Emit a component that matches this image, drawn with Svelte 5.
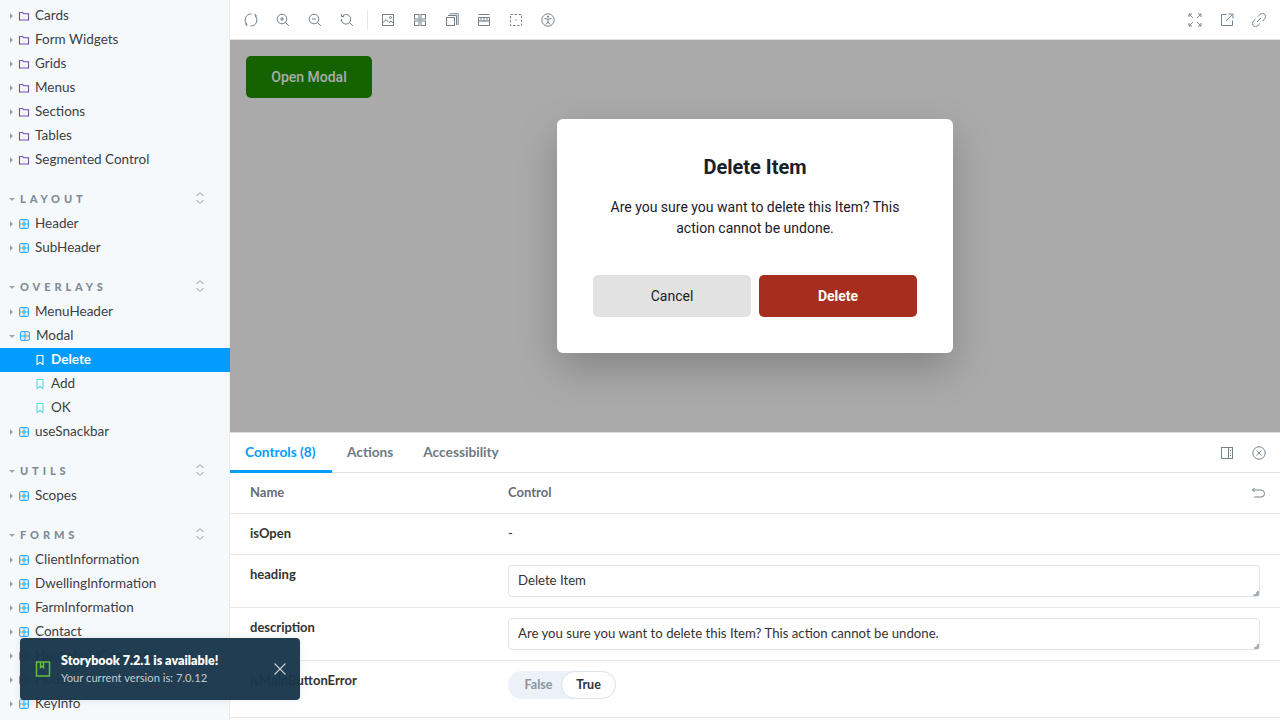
<script>
	const sections = [
		{ items: ['Cards', 'Form Widgets', 'Grids', 'Menus', 'Sections', 'Tables', 'Segmented Control'].map((name) => ({ name, kind: 'folder' })) },
		{ title: 'LAYOUT', items: ['Header', 'SubHeader'].map((name) => ({ name, kind: 'comp' })) },
		{
			title: 'OVERLAYS',
			items: [
				{ name: 'MenuHeader', kind: 'comp' },
				{ name: 'Modal', kind: 'comp', open: true },
				{ name: 'Delete', kind: 'story', selected: true },
				{ name: 'Add', kind: 'story' },
				{ name: 'OK', kind: 'story' },
				{ name: 'useSnackbar', kind: 'comp' }
			]
		},
		{ title: 'UTILS', items: [{ name: 'Scopes', kind: 'comp' }] },
		{
			title: 'FORMS',
			items: ['ClientInformation', 'DwellingInformation', 'FarmInformation', 'Contact', 'HouseholdContents', 'House', 'KeyInfo'].map((name) => ({ name, kind: 'comp' }))
		}
	];

	const tabs = ['Controls (8)', 'Actions', 'Accessibility'];
</script>

<div class="shell">
	<aside class="sidebar">
		{#each sections as section}
			<section class="group">
				{#if section.title}
					<div class="heading">
						<span class="caret down"></span>
						<span class="heading-text">{section.title}</span>
						<svg class="expand" width="10" height="14" viewBox="0 0 10 14" fill="none" stroke="#8a97a1" stroke-width="1">
							<path d="M1.5 5 5 1.5 8.5 5M1.5 9 5 12.5 8.5 9" />
						</svg>
					</div>
				{/if}
				{#each section.items as item}
					<div class="row" class:story={item.kind === 'story'} class:selected={item.selected}>
						{#if item.kind !== 'story'}
							<span class="caret" class:down={item.open}></span>
						{/if}
						{#if item.kind === 'folder'}
							<svg width="12" height="12" viewBox="0 0 12 12" fill="none" stroke="#6f4fb0" stroke-width="1.1">
								<path d="M1.5 10V2.5h3l1 1.2h5V10z" />
							</svg>
						{:else if item.kind === 'comp'}
							<svg width="12" height="12" viewBox="0 0 12 12" fill="none" stroke="#3fa9f5" stroke-width="1">
								<rect x="1.5" y="1.5" width="9" height="9" rx="1.5" fill="#d4ecfd" />
								<path d="M6 1.5v9M1.5 6h9" />
							</svg>
						{:else}
							<svg width="10" height="12" viewBox="0 0 10 12" fill="none" stroke={item.selected ? '#fff' : '#5fdcd8'} stroke-width="1.1">
								<path d="M2 1.5h6v9L5 8.5l-3 2z" />
							</svg>
						{/if}
						<span class="label">{item.name}</span>
					</div>
				{/each}
			</section>
		{/each}
	</aside>

	<main class="content">
		<div class="toolbar">
			<div class="tools">
				<svg class="ic" viewBox="0 0 14 14"><path d="M7.5 1A6 6 0 0 0 2.800 11.200M6.500 13A6 6 0 0 0 11.200 2.800M11.200 .8V3h2M2.800 13.200V11H.8" /></svg>
				<svg class="ic" viewBox="0 0 14 14"><circle cx="6" cy="6" r="4.8" /><path d="M9.5 9.5 13 13M4 6h4M6 4v4" /></svg>
				<svg class="ic" viewBox="0 0 14 14"><circle cx="6" cy="6" r="4.8" /><path d="M9.5 9.5 13 13M4 6h4" /></svg>
				<svg class="ic" viewBox="0 0 14 14"><path d="M2.5 3A4.8 4.8 0 1 1 1.2 6M9.5 9.5 13 13M1.5 1v2.500H4" /></svg>
				<span class="sep"></span>
				<svg class="ic" viewBox="0 0 14 14"><rect x="1.5" y="1.5" width="11" height="11" /><path d="M1.5 10 5 6.500l3 3 2-1.500 2.500 2.500" /><circle cx="9.500" cy="4.500" r="1" /></svg>
				<svg class="ic" viewBox="0 0 14 14"><rect x="1.5" y="1.5" width="4.5" height="4.5" /><rect x="8" y="1.5" width="4.5" height="4.5" /><rect x="1.5" y="8" width="4.5" height="4.5" /><rect x="8" y="8" width="4.5" height="4.5" /><rect class="solid" x="5" y="5" width="4" height="4" /></svg>
				<svg class="ic" viewBox="0 0 14 14"><rect x="1.5" y="4.5" width="8" height="8" /><path d="M3 2.500h8.500V12M4.500 .8h8.700V12" /></svg>
				<svg class="ic" viewBox="0 0 14 14"><rect class="solid" x="2" y="7" width="10" height="2" /><path d="M1.500 1.500h11M1.500 4.500h11v8h-11zM4 4.500v2.500M7 4.500v3.500M10 4.500v2.500" /></svg>
				<svg class="ic" viewBox="0 0 14 14"><rect x="1.5" y="1.5" width="11" height="11" stroke-dasharray="2.4 1.6" /><rect class="solid dark" x="6.4" y="6.4" width="1.2" height="1.2" /></svg>
				<svg class="ic" viewBox="0 0 14 14"><circle cx="7" cy="7" r="6.2" /><circle class="solid dark" cx="7" cy="3.8" r="1" /><path d="M3.5 5.500 7 6.300l3.500-.8M7 6.300v2.500L5 11.500M7 8.800l2 2.700" /></svg>
			</div>
			<div class="tools">
				<svg class="ic" viewBox="0 0 14 14"><path d="M1.500 1.500 5 5M12.500 1.500 9 5M1.500 12.500 5 9M12.500 12.500 9 9M1 4V1h3M10 1h3v3M1 10v3h3M13 10v3h-3" /></svg>
				<svg class="ic" viewBox="0 0 14 14"><path d="M6.500 1.500h-5v11h11v-5M6 8l6-6M8.500 1H13v4.500" /></svg>
				<svg class="ic" viewBox="0 0 14 14"><path d="M5 9 9 5M6 3.500 8.200 1.300a2.700 2.700 0 0 1 4.500 4.500L10.500 8M3.500 6 1.300 8.200a2.700 2.700 0 0 0 4.500 4.500L8 10.500" /></svg>
			</div>
		</div>

		<div class="canvas">
			<button class="open-btn">Open Modal</button>
			<div class="overlay">
				<div class="modal">
					<h2>Delete Item</h2>
					<p>Are you sure you want to delete this Item? This action cannot be undone.</p>
					<div class="actions">
						<button class="cancel">Cancel</button>
						<button class="delete">Delete</button>
					</div>
				</div>
			</div>
		</div>

		<div class="panel">
			<div class="tabbar">
				<div class="tabs">
					{#each tabs as tab, i}
						<div class="tab" class:active={i === 0}>{tab}</div>
					{/each}
				</div>
				<div class="tools">
					<svg class="ic" viewBox="0 0 14 14"><rect x="1.5" y="1.5" width="11" height="11" /><path d="M8.500 1.500v11M10.500 4v1M10.500 6.500v1M10.500 9v1" /></svg>
					<svg class="ic" viewBox="0 0 14 14"><circle cx="7" cy="7" r="6.2" /><path d="M4.500 4.500l5 5M9.500 4.500l-5 5" /></svg>
				</div>
			</div>
			<div class="args">
				<div class="arg head">
					<div class="name">Name</div>
					<div class="control">Control</div>
					<svg class="ic undo" viewBox="0 0 14 14"><path d="M3.500 2 1.500 4l2 2M1.500 4H10a3 3 0 0 1 0 7H3" /></svg>
				</div>
				<div class="arg">
					<div class="name">isOpen</div>
					<div class="control">-</div>
				</div>
				<div class="arg">
					<div class="name">heading</div>
					<div class="field-wrap">
						<textarea class="field" rows="1">Delete Item</textarea>
					</div>
				</div>
				<div class="arg">
					<div class="name">description</div>
					<div class="field-wrap">
						<textarea class="field" rows="1">Are you sure you want to delete this Item? This action cannot be undone.</textarea>
					</div>
				</div>
				<div class="arg toggle-row">
					<div class="name">isMainButtonError</div>
					<div class="toggle">
						<span class="off">False</span>
						<span class="on">True</span>
					</div>
				</div>
			</div>
		</div>
	</main>

	<div class="toast">
		<svg width="16" height="16" viewBox="0 0 16 16" fill="none" stroke="#66bf3c" stroke-width="1.5">
			<path d="M1.500 1h13v14h-13zM5.500 1v5.500l1.500-1.200 1.500 1.200V1" />
		</svg>
		<div class="toast-text">
			<strong>Storybook 7.2.1 is available!</strong>
			<span>Your current version is: 7.0.12</span>
		</div>
		<svg class="toast-close" width="14" height="14" viewBox="0 0 14 14" fill="none" stroke="#c9d1d7" stroke-width="1.1">
			<path d="M1.500 1.500l11 11M12.500 1.500l-11 11" />
		</svg>
	</div>
</div>

<style>
	:global(body) {
		margin: 0;
		font-family: Lato, 'Liberation Sans', sans-serif;
		color: #333;
	}

	.shell {
		position: relative;
		display: flex;
		width: 1280px;
		height: 720px;
		overflow: hidden;
	}

	.sidebar {
		width: 230px;
		flex: none;
		height: 720px;
		overflow: hidden;
		padding-top: 4px;
		box-sizing: border-box;
		background: #f6f9fc;
		box-shadow: inset -1px 0 0 #e9edf1;
		font-size: 13.5px;
		color: #3a3f44;
	}

	.group {
		margin-bottom: 15px;
	}

	.heading {
		display: flex;
		align-items: center;
		height: 24px;
		margin-bottom: 1px;
		padding-left: 9px;
		padding-right: 25px;
	}

	.heading-text {
		flex: 1;
		margin-left: 5px;
		padding-bottom: 2px;
		font-size: 11px;
		font-weight: 900;
		letter-spacing: 3.9px;
		color: #7f8c96;
	}

	.expand {
		margin-bottom: 2px;
	}

	.row {
		display: flex;
		align-items: center;
		height: 24px;
		padding-left: 10px;
	}

	.row svg {
		margin-left: 5px;
		margin-right: 5px;
		flex: none;
	}

	.label {
		padding-bottom: 2px;
	}

	.row.story {
		padding-left: 35px;
	}

	.row.story svg {
		margin-left: 0;
		margin-right: 6px;
	}

	.row.selected {
		background: #029cfd;
		color: #fff;
		font-weight: 700;
	}

	.caret {
		width: 0;
		height: 0;
		flex: none;
		border-left: 3px solid #9aa5ad;
		border-top: 3px solid transparent;
		border-bottom: 3px solid transparent;
	}

	.caret.down {
		border-left: 3px solid transparent;
		border-right: 3px solid transparent;
		border-top: 3px solid #9aa5ad;
		border-bottom: 0;
	}

	.row .caret.down {
		margin-left: -1px;
		margin-right: -1px;
	}

	.content {
		flex: 1;
		min-width: 0;
		display: flex;
		flex-direction: column;
	}

	.toolbar {
		display: flex;
		justify-content: space-between;
		align-items: center;
		height: 39px;
		flex: none;
		padding: 0 14px;
		background: #fff;
		border-bottom: 1px solid #dfe3e7;
	}

	.tools {
		display: flex;
		align-items: center;
		gap: 18px;
	}

	.ic {
		width: 14px;
		height: 14px;
		flex: none;
		fill: none;
		stroke: #73828c;
		stroke-width: 1;
	}

	.ic .solid {
		fill: #a9b4bb;
		stroke: none;
	}

	.ic .solid.dark {
		fill: #73828c;
	}

	.sep {
		width: 1px;
		height: 20px;
		background: #e4e7ea;
		margin: 0 -5px;
	}

	.canvas {
		position: relative;
		height: 392px;
		flex: none;
		padding: 16px;
		box-sizing: border-box;
		background: #fff;
		font-family: Roboto, sans-serif;
	}

	.open-btn {
		display: block;
		width: 126px;
		height: 42px;
		border: 0;
		border-radius: 5px;
		background: #209300;
		color: #fff;
		font: 500 14px Roboto, sans-serif;
	}

	.overlay {
		position: absolute;
		inset: 0;
		display: flex;
		align-items: center;
		justify-content: center;
		background: rgba(0, 0, 0, 0.335);
	}

	.modal {
		width: 396px;
		height: 234px;
		padding: 36px;
		box-sizing: border-box;
		border-radius: 6px;
		background: #fff;
		text-align: center;
		box-shadow: 0 16px 40px rgba(0, 0, 0, 0.22);
	}

	h2 {
		margin: 0;
		font-size: 20px;
		line-height: 24px;
		font-weight: 700;
		color: #1a202c;
	}

	.modal p {
		margin: 18px 0 0;
		font-size: 14px;
		line-height: 21px;
		color: #1a202c;
	}

	.actions {
		display: flex;
		gap: 8px;
		margin-top: 36px;
	}

	.actions button {
		flex: 1;
		height: 42px;
		border: 0;
		border-radius: 5px;
		font: 400 14px Roboto, sans-serif;
	}

	.cancel {
		background: #e2e2e2;
		color: #1a202c;
	}

	.actions .delete {
		background: #a72e1e;
		color: #fff;
		font-weight: 700;
	}

	.panel {
		flex: 1;
		min-height: 0;
		background: #fff;
		font-size: 13px;
		color: #333;
		border-top: 1px solid #d9dee2;
	}

	.tabbar {
		display: flex;
		justify-content: space-between;
		align-items: center;
		height: 39px;
		padding-right: 14px;
		border-bottom: 1px solid #e1e5e9;
	}

	.tabs {
		display: flex;
		height: 40px;
		margin-bottom: -1px;
	}

	.tab {
		padding: 0 15px;
		line-height: 38px;
		font-size: 13.7px;
		font-weight: 700;
		color: #6d7a84;
		box-sizing: border-box;
	}

	.tab.active {
		padding-right: 16.5px;
		color: #029cfd;
		border-bottom: 3px solid #029cfd;
	}

	.arg {
		position: relative;
		display: flex;
		align-items: flex-start;
		padding: 10px 20px;
		border-bottom: 1px solid #e6e9ec;
		line-height: 20px;
	}

	.name {
		width: 258px;
		flex: none;
		margin-top: -1px;
		margin-bottom: 1px;
		font-weight: 700;
		color: #333;
	}

	.control {
		margin-top: -1px;
		margin-bottom: 1px;
	}

	.head .name,
	.head .control {
		font-weight: 700;
		color: #666e75;
	}

	.undo {
		position: absolute;
		right: 15px;
		top: 13px;
	}

	.field-wrap {
		position: relative;
		flex: 1;
		height: 32px;
	}

	.field-wrap::after {
		content: '';
		position: absolute;
		right: 1px;
		bottom: 1px;
		width: 6px;
		height: 6px;
		background: linear-gradient(135deg, transparent 50%, #a9b1b7 50%);
	}

	.field {
		display: block;
		width: 100%;
		height: 32px;
		box-sizing: border-box;
		padding: 5px 9px;
		border: 1px solid #dde3e8;
		border-radius: 4px;
		font: 13.2px/18px Lato, sans-serif;
		color: #333;
		background: #fff;
		outline: 0;
		resize: none;
		overflow: hidden;
	}

	.toggle-row {
		padding-bottom: 18px;
	}

	.toggle {
		display: flex;
		align-items: center;
		width: 108px;
		height: 28px;
		box-sizing: border-box;
		border-radius: 14px;
		background: #ecf2f7;
		font-size: 12.5px;
		font-weight: 700;
	}

	.off {
		width: 53px;
		padding-left: 8px;
		box-sizing: border-box;
		text-align: center;
		color: #8a949c;
	}

	.on {
		flex: 1;
		height: 28px;
		line-height: 25px;
		box-sizing: border-box;
		text-align: center;
		border: 1px solid #dbe3e9;
		border-radius: 14px;
		background: #fff;
		color: #333;
	}

	.toast {
		position: absolute;
		left: 20px;
		top: 638px;
		display: flex;
		align-items: center;
		width: 280px;
		height: 62px;
		box-sizing: border-box;
		padding: 0 13px 0 15px;
		border-radius: 4px;
		background: rgba(25, 55, 75, 0.97);
		box-shadow: 0 0 6px rgba(0, 0, 0, 0.1);
	}

	.toast-text {
		flex: 1;
		display: flex;
		flex-direction: column;
		margin-left: 10px;
		font-size: 11.2px;
		line-height: 16px;
		color: #c2cbd2;
	}

	.toast-text strong {
		color: #fff;
		font-weight: 800;
		font-size: 12.5px;
		margin-bottom: 1px;
	}
</style>
